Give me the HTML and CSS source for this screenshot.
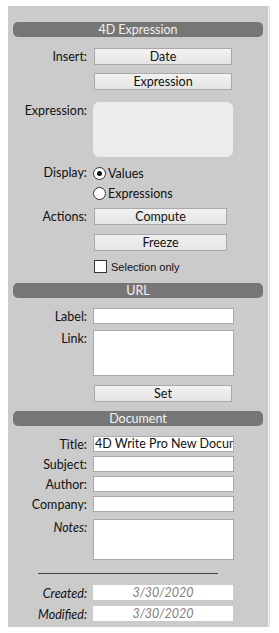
FILE: index.html
```html
<!DOCTYPE html>
<html lang="en">
<head>
  <meta charset="UTF-8" />
  <title>Document properties</title>
  <link rel="stylesheet" href="styles.css">
</head>
<body>
  <div class="panel">
    <div class="section-title first">4D Expression</div>

    <div class="row row-date">
      <span class="label">Insert:</span>
      <button class="btn">Date</button>
    </div>
    <div class="row row-gap8">
      <span class="label"></span>
      <button class="btn">Expression</button>
    </div>
    <div class="row row-expr">
      <span class="label">Expression:</span>
      <div class="expr-box"></div>
    </div>

    <div class="row radio-row first-radio">
      <span class="label">Display:</span>
      <label class="choice"><span class="radio checked"></span>Values</label>
    </div>
    <div class="row radio-row">
      <span class="label"></span>
      <label class="choice"><span class="radio"></span>Expressions</label>
    </div>

    <div class="row row-compute">
      <span class="label">Actions:</span>
      <button class="btn btn-short">Compute</button>
    </div>
    <div class="row row-gap9">
      <span class="label"></span>
      <button class="btn btn-short">Freeze</button>
    </div>
    <div class="row row-check">
      <span class="label"></span>
      <label class="choice small"><span class="checkbox"></span>Selection only</label>
    </div>

    <div class="section-title">URL</div>

    <div class="row row-first-field">
      <span class="label">Label:</span>
      <div class="field"></div>
    </div>
    <div class="row row-gap5">
      <span class="label">Link:</span>
      <div class="field area-link"></div>
    </div>
    <div class="row row-set">
      <span class="label"></span>
      <button class="btn">Set</button>
    </div>

    <div class="section-title">Document</div>

    <div class="row row-first-field">
      <span class="label">Title:</span>
      <div class="field filled">4D Write Pro New Document</div>
    </div>
    <div class="row row-gap3">
      <span class="label">Subject:</span>
      <div class="field"></div>
    </div>
    <div class="row row-gap3">
      <span class="label">Author:</span>
      <div class="field"></div>
    </div>
    <div class="row row-gap3">
      <span class="label">Company:</span>
      <div class="field"></div>
    </div>
    <div class="row row-gap6">
      <span class="label italic">Notes:</span>
      <div class="field area-notes"></div>
    </div>

    <div class="divider"></div>

    <div class="row row-created">
      <span class="label italic">Created:</span>
      <div class="date-field">3/30/2020</div>
    </div>
    <div class="row row-gap4">
      <span class="label italic">Modified:</span>
      <div class="date-field">3/30/2020</div>
    </div>
  </div>
</body>
</html>
```

FILE: styles.css
```css
body {
  margin: 0;
  background: #ffffff;
  font-family: Lato, 'Open Sans', sans-serif;
  font-size: 12.5px;
  color: #111;
}

.panel {
  width: 255px;
  height: 621px;
  margin: 6px 0 0 8px;
  padding-left: 5px;
  background: #cbcbcb;
  box-shadow: 1px 0 0 #f4f4f4, 2px 0 0 #dedede;
  overflow: hidden;
}

.section-title {
  width: 250px;
  height: 15px;
  line-height: 15px;
  margin-top: 9px;
  background: #767676;
  color: #f2f2f2;
  text-align: center;
  border-radius: 5px;
}

.section-title.first {
  margin-top: 16px;
}

.row {
  display: flex;
  align-items: flex-start;
}

.label {
  width: 74px;
  margin-right: 6px;
  text-align: right;
  line-height: 17px;
  flex-shrink: 0;
}

.italic {
  font-style: italic;
}

.btn {
  width: 138px;
  height: 17px;
  margin: 0 0 0 1px;
  padding: 0;
  font-family: inherit;
  font-size: 12.5px;
  line-height: 15px;
  color: #111;
  background: linear-gradient(#f2f2f2, #e4e4e4);
  border: 1px solid #a9a9a9;
}

.btn-short {
  width: 133px;
}

.row-date { margin-top: 11px; }
.row-gap8 { margin-top: 8px; }
.row-gap9 { margin-top: 9px; }
.row-gap6 { margin-top: 6px; }
.row-gap5 { margin-top: 5px; }
.row-gap4 { margin-top: 4px; }
.row-gap3 { margin-top: 3px; }
.row-expr { margin-top: 12px; }
.row-compute { margin-top: 4px; }
.row-check { margin-top: 8px; }
.row-first-field { margin-top: 10px; }
.row-set { margin-top: 9px; }
.row-created { margin-top: 11px; }

.expr-box {
  width: 140px;
  height: 55px;
  background: #ececec;
  border-radius: 6px;
}

.radio-row {
  height: 20px;
}

.first-radio {
  margin-top: 7px;
}

.radio-row .label {
  line-height: 18px;
}

.choice {
  display: flex;
  align-items: center;
  height: 18px;
}

.radio {
  width: 11px;
  height: 11px;
  margin-right: 2px;
  border: 1px solid #333;
  border-radius: 50%;
  background: #fff;
  position: relative;
}

.radio.checked::after {
  content: "";
  position: absolute;
  left: 3px;
  top: 3px;
  width: 5px;
  height: 5px;
  border-radius: 50%;
  background: #111;
}

.small {
  font-family: 'Liberation Sans', Arial, sans-serif;
  font-size: 11px;
  height: 15px;
}

.checkbox {
  width: 11px;
  height: 11px;
  margin: 0 4px 0 1px;
  background: #fff;
  border: 1px solid #333;
}

.field {
  width: 139px;
  height: 14px;
  line-height: 14px;
  background: #fff;
  border: 1px solid #a9a9a9;
  overflow: hidden;
  white-space: nowrap;
}

.field.filled {
  padding-left: 1px;
  width: 138px;
}

.area-link {
  height: 44px;
}

.area-notes {
  height: 39px;
}

.divider {
  width: 180px;
  height: 1px;
  margin: 13px 0 0 25px;
  background: #444;
}

.date-field {
  width: 140px;
  height: 15px;
  line-height: 15px;
  background: #fff;
  color: #808080;
  font-style: italic;
  text-align: center;
}
```
